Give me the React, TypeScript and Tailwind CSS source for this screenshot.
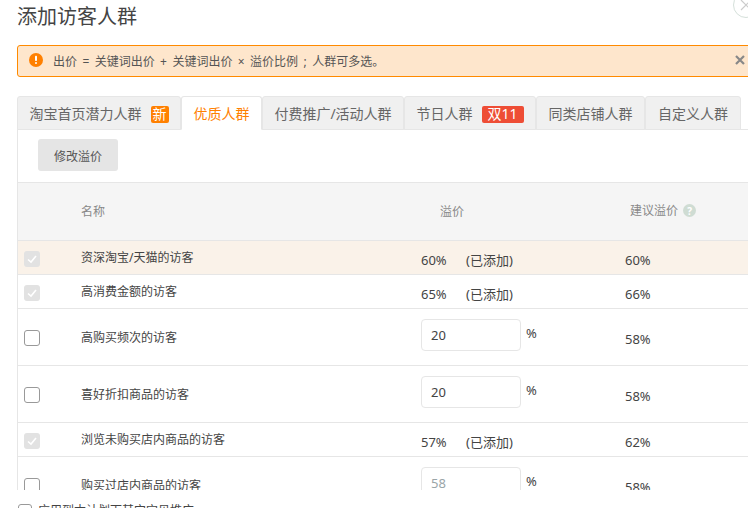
const rows = [
  { name: "资深淘宝/天猫的访客", added: "60%", suggest: "60%", hi: true },
  { name: "高消费金额的访客", added: "65%", suggest: "66%" },
  { name: "高购买频次的访客", value: "20", suggest: "58%" },
  { name: "喜好折扣商品的访客", value: "20", suggest: "58%" },
  { name: "浏览未购买店内商品的访客", added: "57%", suggest: "62%" },
  { name: "购买过店内商品的访客", value: "58", suggest: "58%", muted: true },
];

const Check = ({ on }: { on: boolean }) =>
  on ? (
    <span className="flex h-4 w-4 items-center justify-center rounded-[3px] bg-[#e2e2e2]">
      <svg viewBox="0 0 16 16" className="h-4 w-4" fill="none" stroke="#fff" strokeWidth="1.6">
        <path d="M4 8.5l3 2.5 5-6" />
      </svg>
    </span>
  ) : (
    <span className="block h-4 w-4 rounded-[3px] border border-[#999]" />
  );

const Tab = ({ label, width, active, badge }: { label: string; width: string; active?: boolean; badge?: React.ReactNode }) => (
  <div
    className={`flex h-[34px] items-center justify-center gap-[9px] rounded-t-[3px] border border-[#e6e6e6] pt-[2px] ${width} ${
      active ? "border-b-white bg-white text-[#ff8000]" : "bg-[#f0f0f0] text-[#666]"
    }`}
  >
    <span>{label}</span>
    {badge}
  </div>
);

export default function App() {
  return (
    <div className="relative h-[508px] w-[748px] overflow-hidden bg-white font-['Noto_Sans','Noto_Sans_CJK_SC',sans-serif] text-xs text-[#444]">
      <div className="absolute -top-2 left-[733px] flex h-[26px] w-[26px] items-center justify-center rounded-full border border-[#d5e0da] text-[#ccc]">
        <svg viewBox="0 0 12 12" className="h-3 w-3" stroke="#ccc" strokeWidth="1.2">
          <path d="M1 1l10 10M11 1L1 11" />
        </svg>
      </div>

      <h1 className="pl-[17px] pt-[2px] text-xl leading-[30px] font-normal text-[#444]">添加访客人群</h1>

      <div className="ml-[17px] mt-[13px] flex h-8 w-[740px] items-center rounded-[3px] border border-[#ff8a00] bg-[#fee6cc] pl-[11px]">
        <svg viewBox="0 0 14 14" className="-mt-[2px] h-[14px] w-[14px]">
          <circle cx="7" cy="7" r="7" fill="#ff8000" />
          <rect x="6" y="2.8" width="2" height="5.2" rx="0.8" fill="#fff" />
          <rect x="6" y="9" width="2" height="2" rx="1" fill="#fff" />
        </svg>
        <span className="ml-[10px] mt-[2px] whitespace-pre text-[#555] [word-spacing:2.3px]">出价 = 关键词出价 + 关键词出价 × 溢价比例 ; 人群可多选。</span>
      </div>
      <svg viewBox="0 0 10 10" className="absolute left-[735px] top-[55px] h-[10px] w-[10px]" stroke="#888" strokeWidth="2.2">
        <path d="M1 1l8 8M9 1L1 9" />
      </svg>

      <div className="ml-[17px] mt-[19px] flex w-[731px] border-b border-[#e6e6e6] text-sm leading-none">
        <div className="-mb-px flex">
          <Tab
            label="淘宝首页潜力人群"
            width="w-[164px]"
            badge={<span className="flex h-[17px] w-[18px] items-center justify-center rounded-[2px] bg-[#ff8000] text-white">新</span>}
          />
          <Tab label="优质人群" width="w-[81px]" active />
          <Tab label="付费推广/活动人群" width="w-[142px]" />
          <Tab
            label="节日人群"
            width="w-[132px]"
            badge={<span className="flex h-[17px] w-[42px] items-center justify-center rounded-[2px] bg-[#ee4d35] text-white">双11</span>}
          />
          <Tab label="同类店铺人群" width="w-[109px]" />
          <Tab label="自定义人群" width="w-[96px]" />
        </div>
      </div>

      <div className="ml-[17px] h-[360px] w-[731px] overflow-hidden border-l border-[#e6e6e6]">
        <div className="h-[52px] pl-5 pt-[9px]">
          <button className="h-8 w-20 rounded-[3px] bg-[#e5e5e5] pt-[3px] text-[#555]">修改溢价</button>
        </div>
        <div className="grid h-[59px] grid-cols-[403px_200px_1fr] items-center border-y border-[#e6e6e6] bg-[#f5f5f5] text-[#888]">
          <span className="pl-[63px]">名称</span>
          <span className="pl-[19px]">溢价</span>
          <span className="-mt-[2px] flex items-center gap-1 pl-[9px]">
            建议溢价
            <span className="ml-[1px] flex h-[13px] w-[13px] items-center justify-center rounded-full bg-[#cfdcd3] text-[10px] font-bold leading-none text-white">?</span>
          </span>
        </div>
        {rows.map((r) => (
          <div
            key={r.name}
            className={`grid grid-cols-[63px_340px_204px_1fr] items-center border-b border-[#e6e6e6] ${
              r.added ? "h-[34px]" : "h-[57px]"
            } ${r.hi ? "bg-[#faf2e9]" : ""}`}
          >
            <span className="mt-[2px] pl-[6px]">
              <Check on={!!r.added} />
            </span>
            <span className="mt-[1px]">{r.name}</span>
            {r.added ? (
              <span className="mt-[7px] flex text-[13px]">
                <span className="w-[45px]">{r.added}</span>
                <span>(已添加)</span>
              </span>
            ) : (
              <span className="-mt-[4px] flex items-start gap-[5px] text-[13px]">
                <span className={`flex h-8 w-[100px] items-center rounded-[4px] border border-[#e6e6e6] pl-[9px] pt-[1px] ${r.muted ? "text-[#9aa5a8]" : ""}`}>
                  {r.value}
                </span>
                <span className="mt-[6px]">%</span>
              </span>
            )}
            <span className={`text-[13px] ${r.added ? "mt-[7px]" : "mt-[6px]"}`}>{r.suggest}</span>
          </div>
        ))}
      </div>

      <div className="ml-[18px] mt-[13px] flex items-center gap-[6px]">
        <span className="block h-[14px] w-[14px] rounded-[3px] border border-[#999]" />
        <span>应用到本计划下其它宝贝推广</span>
      </div>
    </div>
  );
}
